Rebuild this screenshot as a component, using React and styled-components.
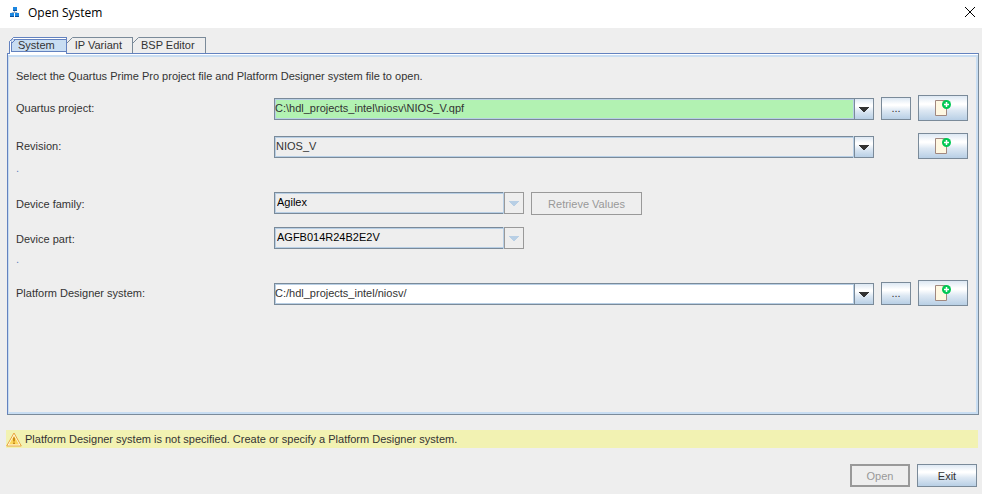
import React, { useState } from 'react';
import styled, { createGlobalStyle } from 'styled-components';

const colors = {
    face: '#eeeeee',
    text: '#333333',
    line: '#7a8a99',
    blue: '#6382bf',
    light: '#b8cfe5',
    tab: '#c8ddf2',
    disabled: '#999999',
}
const metal = 'linear-gradient(#dde8f3 0%, #ffffff 30%, #ffffff 36%, #dde8f3 60%, #b8cfe5 100%)'

const GlobalStyle = createGlobalStyle`
* { box-sizing: border-box; }
body {
    margin: 0;
    background: ${colors.face};
}
button, input, select {
    margin: 0;
    border-radius: 0;
    font: inherit;
    color: inherit;
}
`

const StyledDialog = styled.div`
display: flex;
flex-direction: column;
min-height: 100vh;
background: ${colors.face};
color: ${colors.text};
font: 11px/14px "Liberation Sans", Arial, sans-serif;
`

const TitleBar = styled.header`
display: flex;
align-items: center;
height: 28px;
padding: 0 6px 4px 9px;
background: #fff;
color: #000;
& h1 {
    flex: 1;
    margin: 0 0 0 8px;
    padding-top: 2px;
    font: 12px/16px "Open Sans", "Noto Sans", sans-serif;
}
`

const CloseButton = styled.button`
display: flex;
padding: 0;
border: 0;
background: none;
`

const TabList = styled.div`
display: flex;
height: 17px;
margin: 9px 0 0 9px;
`

const Tab = styled.button`
position: relative;
height: 16px;
padding: 0 10px 2px 8px;
border: 1px solid ${colors.line};
border-width: 1px 1px 0 0;
background: none;
line-height: 14px;
text-align: left;
& svg {
    position: absolute;
    top: -1px;
    left: 0;
}
&[aria-selected='true'] {
    height: 17px;
    padding-right: 11px;
    border-width: 1px 1px 0 1px;
    border-color: ${colors.blue};
    background: ${colors.tab};
    box-shadow: inset 1px 1px #fff, inset 0 -2px #fff, inset 2px 2px ${colors.blue}, inset 0 -3px ${colors.blue};
}
&[aria-selected='true'] svg { left: -1px; }
`

const Panel = styled.main`
flex: 1;
margin: -1px 3px 0 7px;
padding: 11px 10px 12px 8px;
border: 1px solid ${colors.line};
border-left-color: ${colors.blue};
border-top-color: ${colors.blue};
box-shadow: inset 0 1px #fff, inset 0 3px ${colors.tab}, inset -2px -2px ${colors.tab}, inset 1px 0 ${colors.tab};
`

const Intro = styled.p`
margin: 4px 0 12px;
`

const Row = styled.div`
display: flex;
align-items: center;
gap: 7px;
height: ${p => p.$tall ? 26 : 23}px;
margin-bottom: 12px;
& > label {
    width: 251px;
    flex: none;
}
`

const Spacer = styled.div`
height: ${p => p.$h}px;
margin-top: -12px;
padding-top: 2px;
color: ${colors.blue};
`

const StyledCombo = styled.div`
display: grid;
grid-template-columns: 1fr 20px;
height: 22px;
${p => p.$short ? 'width: 250px; align-self: flex-start;' : 'flex: 1; margin-top: 2px;'}
& input, & select {
    grid-area: 1 / 1 / 2 / 2;
    min-width: 0;
    width: 100%;
    height: 22px;
    padding: 0 0 2px;
    border: 1px solid ${colors.line};
    border-right: 0;
    outline: 0;
    background: ${p => p.$fill};
    box-shadow: inset 1px 1px ${colors.light}, inset -1px -1px ${colors.light};
    appearance: none;
}
& select {
    grid-area: 1 / 1 / 2 / 3;
    padding-left: 1px;
    padding-right: 20px;
}
& select:disabled {
    padding-left: 2px;
    color: #000;
    opacity: 1;
}
`

const arrowStyle = `
grid-area: 1 / 2 / 2 / 3;
display: flex;
align-items: center;
justify-content: center;
height: 22px;
padding: 1px 0 0;
`

const ArrowButton = styled.button`
${arrowStyle}
border: 1px solid ${colors.line};
background: ${metal};
`

const ArrowFace = styled.span`
${arrowStyle}
z-index: 1;
pointer-events: none;
border: 1px solid ${p => p.$off ? colors.disabled : colors.line};
background: ${p => p.$off ? colors.face : metal};
box-shadow: -1px 0 ${colors.light};
`

const Button = styled.button`
display: flex;
align-items: center;
justify-content: center;
width: ${p => p.$w}px;
height: ${p => p.$h || 23}px;
padding: 0;
border: 1px solid ${colors.line};
background: ${metal};
&:disabled {
    border-color: ${colors.disabled};
    background: ${colors.face};
    color: ${colors.disabled};
}
&.default:disabled { border-width: 2px; }
`

// wide leaves room for the missing browse button
const AddCell = styled.div`
display: flex;
justify-content: flex-end;
width: ${p => p.$wide ? 87 : 50}px;
`

const Status = styled.div`
display: flex;
align-items: center;
gap: 3px;
height: 18px;
margin: 15px 4px 0 6px;
background: #f2f2b2;
`

const Footer = styled.footer`
display: flex;
justify-content: flex-end;
gap: 7px;
padding: 16px 5px 7px;
`

function Arrow({ off }) {
    return <svg width="10" height="5" viewBox="0 0 10 5" shapeRendering="crispEdges" aria-hidden="true">
        <path d="M0 0h10v1H0zM1 1h8v1H1zM2 2h6v1H2zM3 3h4v1H3zM4 4h2v1H4z" fill={off ? colors.light : colors.text} />
    </svg>
}

function Corner({ selected }) {
    if (selected) return <svg width="9" height="9" viewBox="0 0 9 9" aria-hidden="true">
        <path d="M0 0h5L0 5z" fill={colors.face} />
        <path d="M1.5 6.500V5L5 1.500H8" fill="none" stroke="#fff" />
        <path d="M.5 9V4.500L4.500.500H9M2.500 9V6.500L6.500 2.500H9" fill="none" stroke={colors.blue} />
    </svg>
    return <svg width="6" height="7" viewBox="0 0 6 7" aria-hidden="true">
        <path d="M0 0h6L0 6z" fill={colors.face} />
        <path d="M0 6L5.500 .5" stroke={colors.line} />
    </svg>
}

function SystemIcon() {
    return <svg width="11" height="12" viewBox="0 0 11 12" aria-hidden="true">
        <path d="M5.500 4v3M3 8.500V6.500h5V8.500" fill="none" stroke="#9fb4c8" />
        <path d="M4 1h4v4H4zM1 7h4v4H1zM6 7h4v4H6z" fill="#1c86e0" />
        <path d="M4 4h4v1H4zM1 10h4v1H1zM6 10h4v1H6z" fill="#0a4f9c" />
    </svg>
}

function AddIcon() {
    return <svg width="16" height="16" viewBox="0 0 16 16" aria-hidden="true">
        <path d="M.5.500h11v15H.5z" fill="#fff8e1" stroke="#a1887f" />
        <circle cx="11.500" cy="4.500" r="4.500" fill="#00c853" />
        <path d="M9 4.500h5M11.500 2v5" stroke="#fff" strokeWidth="1.500" />
    </svg>
}

function WarningIcon() {
    return <svg width="16" height="15" viewBox="0 0 16 15" aria-hidden="true">
        <path d="M8 1L15.300 14H.7z" fill="#fffbe8" stroke="#e8a33c" strokeLinejoin="round" />
        <path d="M8 3.500L13 12.500H3z" fill="#fbd65c" />
        <path d="M8 5.500V9.500M8 10.500v1.500" stroke="#c98a1a" strokeWidth="2" />
    </svg>
}

function EditCombo({ id, value, onChange, fill }) {
    return <StyledCombo $fill={fill}>
        <input id={id} type="text" value={value} onChange={(e) => onChange(e.target.value)} />
        <ArrowButton type="button" aria-label="Show list"><Arrow /></ArrowButton>
    </StyledCombo>
}

function Combo({ id, value, short, disabled }) {
    return <StyledCombo $fill={colors.face} $short={short}>
        <select id={id} defaultValue={value} disabled={disabled}>
            <option>{value}</option>
        </select>
        <ArrowFace $off={disabled}><Arrow off={disabled} /></ArrowFace>
    </StyledCombo>
}

function AddButton({ label, wide }) {
    return <AddCell $wide={wide}>
        <Button type="button" $w={50} $h={26} aria-label={label}><AddIcon /></Button>
    </AddCell>
}

const tabs = ['System', 'IP Variant', 'BSP Editor']

export default function App() {
    const [tab, setTab] = useState('System')
    const [project, setProject] = useState('C:\\hdl_projects_intel\\niosv\\NIOS_V.qpf')
    const [system, setSystem] = useState('C:/hdl_projects_intel/niosv/')

    return <StyledDialog>
        <GlobalStyle />
        <TitleBar>
            <SystemIcon />
            <h1>Open System</h1>
            <CloseButton type="button" aria-label="Close">
                <svg width="12" height="12" viewBox="0 0 12 12" aria-hidden="true">
                    <path d="M1 1l10 10M11 1L1 11" stroke="#000" />
                </svg>
            </CloseButton>
        </TitleBar>

        <TabList role="tablist">
            {tabs.map((t) => <Tab key={t} type="button" role="tab" aria-selected={t === tab} onClick={() => setTab(t)}>
                <Corner selected={t === tab} />
                {t}
            </Tab>)}
        </TabList>

        <Panel role="tabpanel" aria-label={tab}>
            <Intro>Select the Quartus Prime Pro project file and Platform Designer system file to open.</Intro>
            <Row $tall>
                <label htmlFor="project">Quartus project:</label>
                <EditCombo id="project" value={project} onChange={setProject} fill="#b2f2b2" />
                <Button type="button" $w={30} aria-label="Browse projects">...</Button>
                <AddButton label="New project" />
            </Row>
            <Row $tall>
                <label htmlFor="revision">Revision:</label>
                <Combo id="revision" value="NIOS_V" />
                <AddButton label="New revision" wide />
            </Row>
            <Spacer $h={33}>.</Spacer>
            <Row>
                <label htmlFor="family">Device family:</label>
                <Combo id="family" value="Agilex" short disabled />
                <Button type="button" $w={111} disabled>Retrieve Values</Button>
            </Row>
            <Row>
                <label htmlFor="part">Device part:</label>
                <Combo id="part" value="AGFB014R24B2E2V" short disabled />
            </Row>
            <Spacer $h={30}>.</Spacer>
            <Row $tall>
                <label htmlFor="system">Platform Designer system:</label>
                <EditCombo id="system" value={system} onChange={setSystem} fill="#fff" />
                <Button type="button" $w={30} aria-label="Browse systems">...</Button>
                <AddButton label="New system" />
            </Row>
        </Panel>

        <Status role="status">
            <WarningIcon />
            Platform Designer system is not specified. Create or specify a Platform Designer system.
        </Status>
        <Footer>
            <Button type="button" className="default" $w={60} disabled>Open</Button>
            <Button type="button" $w={60}>Exit</Button>
        </Footer>
    </StyledDialog>
}
